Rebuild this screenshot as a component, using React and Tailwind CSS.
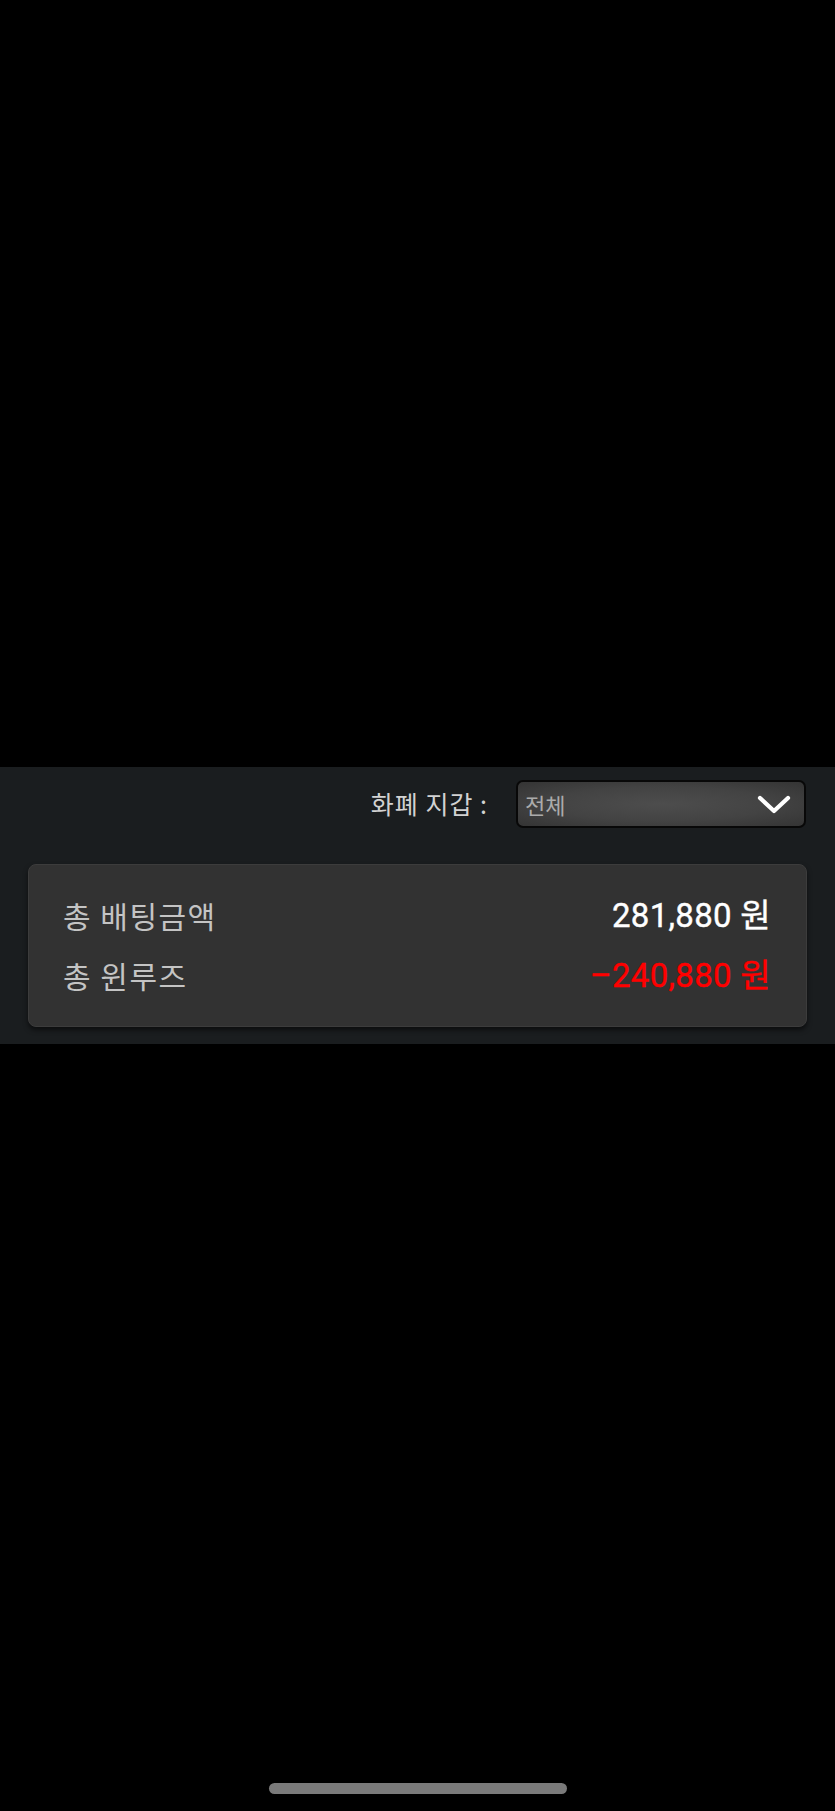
export default function App() {
  const kr = { fontFamily: '"Noto Sans CJK KR", "Noto Sans", sans-serif' };
  const num = { fontFamily: 'Roboto, "Noto Sans CJK KR", sans-serif' };
  return (
    <div className="w-[835px] h-[1811px] bg-black flex flex-col" style={kr}>
      <div className="h-[767px] shrink-0" />
      <div className="h-[277px] shrink-0 bg-[#1a1d1f] px-7 pt-[13px] flex flex-col">
        <div className="flex items-center justify-end pr-px">
          <span className="text-[25px] tracking-[1px] text-[#d2d2d2] leading-none mr-[28px] -translate-y-px">화폐 지갑 :</span>
          <div className="w-[290px] h-[48px] rounded-[7px] border-2 border-[#080808] bg-[radial-gradient(ellipse_at_center,#4d4d4d_0%,#434343_55%,#343434_100%)] flex items-center justify-between pl-[7px] pr-[13px]">
            <span className="text-[22px] text-[#ababab] leading-none">전체</span>
            <svg width="34" height="20" viewBox="0 0 34 20" className="mt-[1px]">
              <polyline points="3,3 17,16 31,3" fill="none" stroke="#ffffff" strokeWidth="4.2" strokeLinecap="round" strokeLinejoin="round" />
            </svg>
          </div>
        </div>
        <div className="mt-[36px] h-[163px] rounded-[8px] bg-[#323232] border border-[#3c3c3c] shadow-[0_3px_5px_rgba(0,0,0,0.55)] pl-[34px] pr-[35px] pt-[30px] flex flex-col gap-[20px]">
          <div className="flex items-center justify-between h-[40px]">
            <span className="text-[30px] tracking-[1.5px] text-[#c4c4c4] leading-none">총 배팅금액</span>
            <span className="text-[33px] font-normal tracking-[0.3px] text-white leading-none [-webkit-text-stroke:0.4px_#ffffff]" style={num}>281,880 원</span>
          </div>
          <div className="flex items-center justify-between h-[40px]">
            <span className="text-[30px] tracking-[1.5px] text-[#c4c4c4] leading-none">총 윈루즈</span>
            <span className="text-[33px] font-normal tracking-[0.3px] text-[#ff0000] leading-none [-webkit-text-stroke:0.4px_#ff0000]" style={num}>–240,880 원</span>
          </div>
        </div>
      </div>
      <div className="flex-1" />
      <div className="flex justify-center mb-[17px]">
        <div className="w-[298px] h-[11px] rounded-full bg-[#7a7a7a]" />
      </div>
    </div>
  );
}
